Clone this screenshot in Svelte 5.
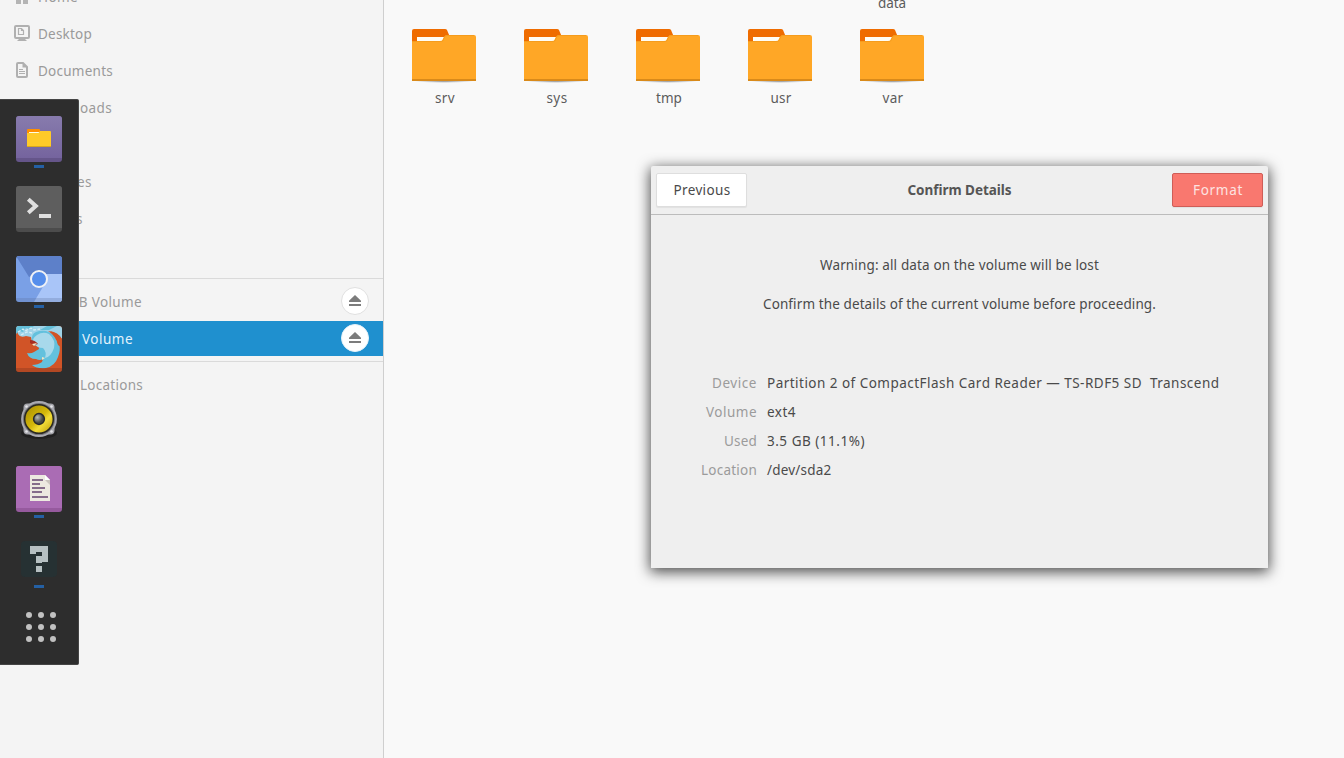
<script>
  const places = [
    { label: 'Home', width: 40, icon: 'home' },
    { label: 'Desktop', width: 54, icon: 'desktop' },
    { label: 'Documents', width: 75, icon: 'document' },
    { label: 'Downloads', width: 74 },
    { label: 'Music', width: 38 },
    { label: 'Pictures', width: 54 },
    { label: 'Videos', width: 45 },
    { label: 'Trash', width: 36 }
  ];
  const volumes = [
    { label: '134 MB Volume', width: 104 },
    { label: '32 GB Volume', width: 95, selected: true }
  ];
  const folders = [
    { label: 'srv', width: 20 },
    { label: 'sys', width: 21 },
    { label: 'tmp', width: 26 },
    { label: 'usr', width: 21 },
    { label: 'var', width: 21 }
  ];
  const details = [
    { label: 'Device', lw: 45, value: 'Partition 2 of CompactFlash Card Reader — TS-RDF5 SD  Transcend', vw: 452.5 },
    { label: 'Volume', lw: 51, value: 'ext4', vw: 29 },
    { label: 'Used', lw: 33, value: '3.5 GB (11.1%)', vw: 98 },
    { label: 'Location', lw: 56, value: '/dev/sda2', vw: 64.5 }
  ];
  const apps = [
    { name: 'files', running: true },
    { name: 'terminal' },
    { name: 'browser', running: true },
    { name: 'firefox' },
    { name: 'speaker' },
    { name: 'editor', running: true },
    { name: 'unknown', running: true },
    { name: 'grid' }
  ];

  // Tracks a label so that its line has the given width in pixels.
  function fit(node, width) {
    const natural = node.getBoundingClientRect().width;
    const count = node.textContent.length;
    node.style.letterSpacing = `${(width - natural) / count}px`;
  }
</script>

<div class="screen">
  <aside>
    {#each places as p}
      <div class="row">
        <span class="ico">
          {#if p.icon === 'home'}
            <svg width="16" height="16"><path d="M8 0 0 8h2v8h5v-4h2v4h5V8h2z" fill="#b4b4b4" /></svg>
          {:else if p.icon === 'desktop'}
            <svg width="16" height="16" fill="none" stroke="#b0b0b0">
              <rect x="1" y="1" width="14" height="12" rx="1" stroke-width="2" />
              <path d="M4.500 3.500h3l2 2v4h-5zM7.500 3.500v2h2" stroke-width="1.200" />
              <path d="M6 13h4l3 3H3z" fill="#b0b0b0" stroke="none" />
            </svg>
          {:else if p.icon === 'document'}
            <svg width="16" height="16" fill="none" stroke="#b0b0b0">
              <path d="M4 1h5l4 4v9q0 1-1 1H4q-1 0-1-1V2q0-1 1-1z" stroke-width="2" />
              <path d="M8.500 1v4.500h5z" fill="#b0b0b0" stroke="none" />
              <path d="M5 7.500h4M5 9.500h6M5 11.500h6" />
            </svg>
          {/if}
        </span>
        <span use:fit={p.width}>{p.label}</span>
      </div>
    {/each}
    <hr />
    {#each volumes as v}
      <div class="row" class:selected={v.selected}>
        <span class="ico"></span>
        <span use:fit={v.width}>{v.label}</span>
        <button class="eject" aria-label="Eject">
          <svg width="12" height="11"><path d="M6 0 12 5.800V7H0V5.800zM0 9h12v2H0z" fill="#7c7c7c" /></svg>
        </button>
      </div>
    {/each}
    <hr />
    <div class="row">
      <span class="ico"></span>
      <span use:fit={105}>Other Locations</span>
    </div>
  </aside>

  <main>
    <div class="above"><span use:fit={28}>data</span></div>
    <div class="folders">
      {#each folders as f}
        <div class="folder">
          <svg width="64" height="56">
            <defs>
              <radialGradient id="shade"><stop offset="0" stop-color="#888" /><stop offset="1" stop-color="#999" stop-opacity="0" /></radialGradient>
            </defs>
            <ellipse cx="32" cy="52" rx="30" ry="2" fill="url(#shade)" />
            <path d="M0 20V2q0-2 2-2h31q1.500 0 2 1l2.500 6v13z" fill="#ef6c00" />
            <path d="M5 8h30v6H5z" fill="#fffdf5" />
            <path d="M0 12h28q2 0 2.700-1.500L32 8q1-2 3-2h27q2 0 2 2v44H0z" fill="#ffa726" />
            <path d="M0 12.500h29.500q1 0 1.500-1l1.500-3.500q.7-1.500 2.500-1.500H62" fill="none" stroke="#f59c1d" />
            <path d="M0 50h64v2H0z" fill="#d98a1a" />
          </svg>
          <span use:fit={f.width}>{f.label}</span>
        </div>
      {/each}
    </div>
  </main>

  <nav class="dock">
    {#each apps as app}
      <div class="app">
        <svg width="46" height="46">
          {#if app.name === 'files'}
            <defs><linearGradient id="violet" x2="0" y2="1"><stop stop-color="#877bad" /><stop offset="1" stop-color="#75649e" /></linearGradient></defs>
            <rect width="46" height="46" rx="3" fill="#65558a" />
            <path d="M0 42V3q0-3 3-3h40q3 0 3 3v39z" fill="url(#violet)" />
            <path d="M11 17v-3q0-1 1-1h11q1 0 1 1v3z" fill="#ff8f00" />
            <path d="M13 16h11v2H13z" fill="#fffde7" />
            <path d="M11 17h11.500l1.500-2h10q1 0 1 1v15H11z" fill="#ffca28" />
            <path d="M11 30.500h24" stroke="#d9a71d" />
          {:else if app.name === 'terminal'}
            <rect width="46" height="46" rx="3" fill="#4c4c4c" />
            <path d="M0 42V3q0-3 3-3h40q3 0 3 3v39z" fill="#5e5e5e" />
            <path d="m12.300 13.300 7.500 6.700-7.500 6.700" fill="none" stroke="#e0e0e0" stroke-width="4" />
            <path d="M23 28h12v4H23z" fill="#e0e0e0" />
          {:else if app.name === 'browser'}
            <defs><clipPath id="tile"><rect width="46" height="46" rx="3" /></clipPath></defs>
            <g clip-path="url(#tile)">
              <path d="M0 0h46v46H0z" fill="#7aa0e6" />
              <path d="M0 0h46v18H23L13 21z" fill="#5d80c9" />
              <path d="M23 18h23v28H18l10-17z" fill="#a9c5f8" />
              <path d="M0 42h46v4H0z" fill="#5b6f99" opacity=".28" />
            </g>
            <circle cx="23" cy="23" r="8" fill="#568eec" stroke="#f1f2f5" stroke-width="2" />
          {:else if app.name === 'firefox'}
            <defs><clipPath id="tile2"><rect width="46" height="46" rx="3" /></clipPath></defs>
            <g clip-path="url(#tile2)">
              <path d="M0 0h46v46H0z" fill="#d15427" />
              <path d="M0 0h46v13q-4-7-12-8l8 10-26 1-1-5-5-1q-6 2-8-2z" fill="#9fd3e8" />
              <path d="M0 0h18l-4 3-4-1-3 4-4-1-3 3zM24 4l7-4h10l-8 4z" fill="#64bfd9" />
              <path d="M2 6l5-3 2 2 6-3 3 2 6-1M5 9l6-3 5 1" fill="none" stroke="#d5eef5" stroke-width="1.300" stroke-dasharray="3 1.500" />
              <path d="M30 5q10 3 12 13l1-3q2 9-1 16-3 9-12 11-9 1-14-3 6 0 10-3l1-3q-3 2-7 0-7 0-9-6 4 1 7-1l5-3q0-3-4-4l-3-4q-1-7 4-9 5-2 10-1z" fill="#63c1dd" />
              <path d="M21 9q6-4 12-1 7 6 5 14-3 9-9 10 2-6-2-10-6 0-10-5-1-5 4-8z" fill="#a8d9eb" />
              <path d="M32 5q9 1 14 8v9l-4-3q-2-9-10-14z" fill="#d15427" />
              <path d="M37 5q7 2 9 6V5z" fill="#9fd3e8" />
              <path d="M14 14q5 0 8 4-4 2-8-1z" fill="#a82e20" />
              <path d="m16 18 5-1-3 3zM26 31l3 1-3 2z" fill="#f4e5c3" />
              <path d="M0 42h46v4H0z" fill="#8f3a1e" opacity=".45" />
            </g>
          {:else if app.name === 'speaker'}
            <defs>
              <linearGradient id="gold" x2="1" y2="1"><stop stop-color="#a58b00" /><stop offset=".5" stop-color="#d5b80b" /><stop offset=".65" stop-color="#f2dc38" /><stop offset="1" stop-color="#b89800" /></linearGradient>
              <radialGradient id="cone" cx=".35" cy=".35"><stop stop-color="#b9bbb8" /><stop offset="1" stop-color="#454846" /></radialGradient>
            </defs>
            <ellipse cx="23" cy="37" rx="18" ry="6" fill="#111" opacity=".45" />
            <rect x="7.500" y="7.500" width="31" height="31" rx="4" fill="#a3a3a9" />
            <circle cx="23" cy="23" r="17" fill="#77777c" stroke="#aaaab1" stroke-width="1.800" />
            <g fill="#e5e5e8"><circle cx="10.500" cy="10.500" r="1.300" /><circle cx="35.500" cy="10.500" r="1.300" /><circle cx="10.500" cy="35.500" r="1.300" /><circle cx="35.500" cy="35.500" r="1.300" /></g>
            <circle cx="23" cy="23" r="14.300" fill="url(#gold)" stroke="#292822" stroke-width="1.500" />
            <circle cx="23" cy="23" r="5.400" fill="url(#cone)" stroke="#292a2a" stroke-width="1.500" />
          {:else if app.name === 'editor'}
            <rect width="46" height="46" rx="3" fill="#965a9e" />
            <path d="M0 42V3q0-3 3-3h40q3 0 3 3v39z" fill="#aa6cb4" />
            <path d="M14 9h15l5 5v21H14z" fill="#ece9e0" />
            <path d="M29 9v5h5z" fill="#fff" /><path d="m29 14 5 5v-5z" fill="#c9c4bd" />
            <path d="M16 14h11M16 18h8M16 22h13M16 26h10M16 31h16" stroke="#856d8b" stroke-width="2" />
          {:else if app.name === 'unknown'}
            <rect x="5" y="5" width="36" height="36" rx="4" fill="#263133" />
            <path d="M14 10h18v16h-6v1h-6v-7h6v-4h-6v2h-6zM20 30h6v6h-6z" fill="#b6c0c2" />
          {:else}
            <g fill="#c1c1c1">
              {#each [9, 21, 33] as y}
                {#each [13, 25, 37] as x}
                  <circle cx={x} cy={y} r="3" />
                {/each}
              {/each}
            </g>
          {/if}
        </svg>
        {#if app.running}<i></i>{/if}
      </div>
    {/each}
  </nav>

  <section class="dialog">
    <header>
      <button class="prev"><span use:fit={57}>Previous</span></button>
      <strong><span use:fit={104}>Confirm Details</span></strong>
      <button class="format"><span use:fit={50}>Format</span></button>
    </header>
    <p class="warning"><span use:fit={279}>Warning: all data on the volume will be lost</span></p>
    <p><span use:fit={393}>Confirm the details of the current volume before proceeding.</span></p>
    <dl>
      {#each details as d}
        <dt><span use:fit={d.lw}>{d.label}</span></dt>
        <dd><span use:fit={d.vw}>{d.value}</span></dd>
      {/each}
    </dl>
  </section>
</div>

<style>
  :global(body) { margin: 0; }
  .screen {
    position: relative; display: flex; width: 1344px; height: 758px; overflow: hidden;
    background: #f9f9f9; color: #5c5c5c;
    font: 13.5px/20px "Noto Sans", "Open Sans", sans-serif;
  }
  span { white-space: pre; flex: none; }
  svg { display: block; flex: none; }
  aside {
    box-sizing: border-box; width: 384px; flex: none; border-right: 1px solid #cfcfcf;
    background: #f4f4f4; color: #9a9a9a; margin-top: -21px;
  }
  .row {
    box-sizing: border-box; display: flex; align-items: center; height: 35px;
    margin-bottom: 2px; padding: 1px 14px 0 14px;
  }
  .ico { width: 16px; margin-right: 8px; margin-top: -3px; }
  .row.selected { background: #1f90cf; color: #e4f3fc; }
  hr { height: 1px; margin: 5px 0 5px; border: 0; background: #dadada; }
  .eject {
    display: flex; align-items: center; justify-content: center; width: 28px; height: 28px;
    margin: -2px 0 0 auto; padding: 0 0 2px; border: 1px solid #e0e0e0; border-radius: 50%;
    background: #fff; box-sizing: border-box;
  }
  .selected .eject { border-color: #e6f2f9; }
  main { flex: 1; }
  .above { width: 112px; margin-left: 452px; height: 20px; margin-top: -7px; text-align: center; }
  .folders { display: flex; padding: 16px 0 0 4px; }
  .folder { display: flex; flex-direction: column; align-items: center; width: 112px; }
  .folder span { margin: 3px 0 0 2px; }
  .dock {
    position: absolute; left: 0; top: 99px; box-sizing: border-box; width: 79px; height: 566px;
    padding: 16px 0 0 16px; background: #2d2d2d; border: 1px solid #454545; border-left: 0;
    border-radius: 0 2px 2px 0;
  }
  .app { height: 70px; }
  .app i { display: block; width: 10px; height: 3px; margin: 3px 0 0 18px; background: #2460a4; }
  .dialog {
    position: absolute; left: 651px; top: 166px; width: 617px; height: 402px;
    background: #efefef; color: #4a4a4a; border-radius: 2px 2px 0 0;
    box-shadow: 0 3px 14px 1px rgba(0, 0, 0, .7);
  }
  header {
    box-sizing: border-box; display: flex; align-items: center; justify-content: space-between;
    height: 49px; padding: 0 5px; border-bottom: 1px solid #bcbcbc;
  }
  header button {
    box-sizing: border-box; display: flex; align-items: center; justify-content: center;
    width: 91px; height: 34px; padding: 0 0 1px 1px; border: 1px solid #dedede; border-radius: 2px;
    background: #fff; color: #4a4a4a; font: inherit; box-shadow: 0 1px 1px rgba(0, 0, 0, .06);
  }
  header .format { background: #f9786f; border-color: #cf5d57; color: #fde3e1; }
  strong { font-weight: 700; color: #555; }
  p { margin: 19px 0 0; text-align: center; }
  p.warning { margin-top: 40px; }
  dl { display: grid; grid-template-columns: 106px 1fr; column-gap: 10px; grid-auto-rows: 29px; margin: 59px 0 0; }
  dt { text-align: right; color: #9b9b9b; }
  dd { margin: 0; }
</style>
